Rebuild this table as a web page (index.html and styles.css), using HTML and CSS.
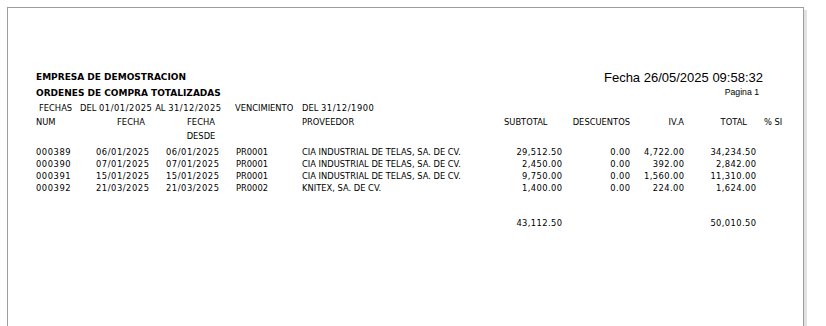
FILE: index.html
```html
<!DOCTYPE html>
<html lang="es">
<head>
<meta charset="utf-8">
<title>Ordenes de compra totalizadas</title>
<link rel="stylesheet" href="styles.css">
</head>
<body>
<div class="sheet">
  <header class="report-head">
    <div class="company">
      <div class="title">EMPRESA DE DEMOSTRACION</div>
      <div class="title">ORDENES DE COMPRA TOTALIZADAS</div>
    </div>
    <div class="stamp">
      <div class="stamp-date">Fecha 26/05/2025 09:58:32</div>
      <div class="stamp-page">Pagina 1</div>
    </div>
  </header>

  <div class="filters">
    <span class="f-label">FECHAS</span>
    <span class="f-range">DEL <span class="n">01/01/2025</span> AL <span class="n">31/12/2025</span></span>
    <span class="f-label2">VENCIMIENTO</span>
    <span class="f-range2">DEL <span class="n">31/12/1900</span></span>
  </div>

  <div class="grid head-row">
    <div>NUM</div>
    <div class="c-center">FECHA</div>
    <div class="c-center">FECHA<br>DESDE</div>
    <div></div>
    <div>PROVEEDOR</div>
    <div class="h-sub">SUBTOTAL</div>
    <div class="c-right">DESCUENTOS</div>
    <div class="c-right">IV.A</div>
    <div class="h-total">TOTAL</div>
    <div class="h-pct">% SI</div>
  </div>

  <div class="rows">
    <div class="grid data-row">
      <div class="n">000389</div><div class="n">06/01/2025</div><div class="n">06/01/2025</div><div>PR0001</div>
      <div>CIA INDUSTRIAL DE TELAS, SA. DE CV.</div>
      <div class="amt">29,512.50</div><div class="amt">0.00</div><div class="amt">4,722.00</div><div class="amt">34,234.50</div><div></div>
    </div>
    <div class="grid data-row">
      <div class="n">000390</div><div class="n">07/01/2025</div><div class="n">07/01/2025</div><div>PR0001</div>
      <div>CIA INDUSTRIAL DE TELAS, SA. DE CV.</div>
      <div class="amt">2,450.00</div><div class="amt">0.00</div><div class="amt">392.00</div><div class="amt">2,842.00</div><div></div>
    </div>
    <div class="grid data-row">
      <div class="n">000391</div><div class="n">15/01/2025</div><div class="n">15/01/2025</div><div>PR0001</div>
      <div>CIA INDUSTRIAL DE TELAS, SA. DE CV.</div>
      <div class="amt">9,750.00</div><div class="amt">0.00</div><div class="amt">1,560.00</div><div class="amt">11,310.00</div><div></div>
    </div>
    <div class="grid data-row">
      <div class="n">000392</div><div class="n">21/03/2025</div><div class="n">21/03/2025</div><div>PR0002</div>
      <div>KNITEX, SA. DE CV.</div>
      <div class="amt">1,400.00</div><div class="amt">0.00</div><div class="amt">224.00</div><div class="amt">1,624.00</div><div></div>
    </div>
  </div>

  <div class="grid data-row totals">
    <div></div><div></div><div></div><div></div><div></div>
    <div class="amt">43,112.50</div><div></div><div></div><div class="amt">50,010.50</div><div></div>
  </div>
</div>
</body>
</html>
```

FILE: styles.css
```css
html, body {
  margin: 0;
  padding: 0;
  background: #ffffff;
  overflow: hidden;
  height: 100%;
}

body {
  font-family: "DejaVu Sans", "Liberation Sans", sans-serif;
  font-size: 8.34px;
  color: #000;
}

.sheet {
  box-sizing: border-box;
  margin: 7px 0 0 7px;
  width: 797px;
  height: calc(100vh - 7px);
  padding: 61px 20px 0 28px;
  border: 1px solid #9d9d9d;
  border-bottom: none;
  box-shadow: 3px 3px 0 0 #e1e1e1;
  background: #fff;
}

.report-head {
  display: flex;
  justify-content: space-between;
  align-items: flex-start;
}

.title {
  font-weight: bold;
  font-size: 9px;
  line-height: 16px;
  white-space: nowrap;
}

.stamp {
  margin-top: 1px;
  padding-right: 20px;
  text-align: right;
  font-family: "Liberation Sans", Arial, sans-serif;
}

.stamp-date {
  font-size: 13px;
  line-height: 15px;
}

.stamp-page {
  font-size: 8.7px;
  line-height: 11px;
  margin-top: 2px;
  margin-right: 4px;
}

.filters {
  display: flex;
  line-height: 14px;
  white-space: nowrap;
}

.f-label { margin-left: 3px; width: 41px; }
.f-range { width: 155px; }
.f-label2 { width: 67px; }

.n { letter-spacing: 0.55px; }

.grid {
  display: grid;
  grid-template-columns: 60px 70px 70px 66px 198px 62px 68px 54px 72px 27px;
  white-space: nowrap;
}

.head-row {
  line-height: 14px;
}

.c-center { text-align: center; }
.c-right { text-align: right; }
.h-sub { padding-left: 4px; }
.h-total { text-align: right; padding-right: 9px; }
.h-pct { padding-left: 8px; overflow: hidden; }

.amt {
  text-align: right;
  letter-spacing: 0.4px;
  margin-right: -0.4px;
}

.rows {
  margin-top: 3px;
}

.data-row {
  line-height: 12px;
}

.totals {
  margin-top: 23px;
}
```
